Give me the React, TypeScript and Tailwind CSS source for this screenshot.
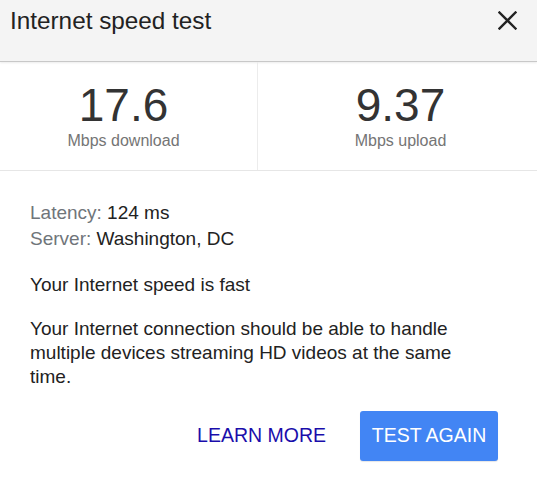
import React from 'react';

const CloseIcon: React.FC = () => (
  <svg width="19" height="19" viewBox="0 0 19 19" className="block">
    <path d="M1.5 1.5 L17.5 17.5 M17.5 1.5 L1.5 17.5" stroke="#222" strokeWidth="2.4" strokeLinecap="square" />
  </svg>
);

const Stat: React.FC<{ value: string; label: string; className: string }> = ({ value, label, className }) => (
  <div className={`flex flex-col items-center pt-[20px] pb-[20px] ${className}`}>
    <div className="text-[46px] leading-[46px] text-[#333]">{value}</div>
    <div className="mt-[3px] text-[16px] leading-[19px] text-[#757575]">{label}</div>
  </div>
);

const App: React.FC = () => {
  return (
    <div className="w-[537px] h-[483px] bg-white font-['Liberation_Sans',Arial,sans-serif] overflow-hidden">
      <header className="h-[62px] flex justify-between items-start bg-[#f4f4f4] border-b border-[#c8c8c8] shadow-[0_1px_2px_rgba(0,0,0,0.08)]">
        <h1 className="pl-[10px] pt-[6px] text-[24.3px] leading-[29px] text-[#222]">Internet speed test</h1>
        <button className="mt-[11px] mr-[20px]">
          <CloseIcon />
        </button>
      </header>

      <div className="flex border-b border-[#e6e6e6]">
        <Stat value="17.6" label="Mbps download" className="w-[258px] pr-[10px] border-r border-[#ececec]" />
        <Stat value="9.37" label="Mbps upload" className="flex-1 pl-[6px]" />
      </div>

      <div className="px-[30px] pt-[29px] text-[19px] text-[#222]">
        <div className="leading-[26px]">
          <div>
            <span className="text-[#70757a]">Latency:</span> 124 ms
          </div>
          <div>
            <span className="text-[#70757a]">Server:</span> Washington, DC
          </div>
        </div>
        <p className="mt-[21px] leading-[24px]">Your Internet speed is fast</p>
        <p className="mt-[20px] leading-[24px] max-w-[440px]">
          Your Internet connection should be able to handle multiple devices streaming HD videos at the same time.
        </p>
      </div>

      <div className="flex justify-end items-center gap-[22px] pr-[39px] mt-[22px]">
        <button className="px-[12px] text-[19.5px] text-[#1a0dab]">LEARN MORE</button>
        <button className="h-[50px] w-[138px] rounded-[3px] bg-[#4285f4] text-[19.5px] text-white shadow-[0_1px_1px_rgba(0,0,0,0.1)]">
          TEST AGAIN
        </button>
      </div>
    </div>
  );
};

export default App;
